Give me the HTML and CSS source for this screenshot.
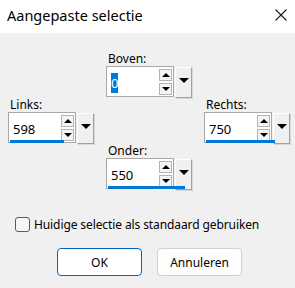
FILE: index.html
```html
<!DOCTYPE html>
<html>
<head>
<meta charset="utf-8">
<link rel="stylesheet" href="styles.css">
</head>
<body>
<div class="window">
  <div class="titlebar">
    <span class="title">Aangepaste selectie</span>
    <svg class="close" width="12" height="12" viewBox="0 0 12 12"><path d="M0.5 0.5L11.5 11.5M11.5 0.5L0.5 11.5" stroke="#1a1a1a" stroke-width="1.1" fill="none"/></svg>
  </div>
  <div class="content">
    <div class="grid">
      <div class="cell boven">
        <div class="label">Boven:</div>
        <div class="spin">
          <div class="row">
            <div class="field"><span class="value"><span class="sel">0</span></span>
              <div class="arrows"><div class="ab"><i class="up"></i></div><div class="ab"><i class="dn"></i></div></div>
            </div>
            <div class="drop"><i class="dd"></i></div>
          </div>
        </div>
      </div>
      <div class="cell links">
        <div class="label">Links:</div>
        <div class="spin">
          <div class="row">
            <div class="field"><span class="value">598</span>
              <div class="arrows"><div class="ab"><i class="up"></i></div><div class="ab"><i class="dn"></i></div></div>
            </div>
            <div class="drop"><i class="dd"></i></div>
          </div>
          <div class="bar" style="width:54px"></div>
        </div>
      </div>
      <div class="cell rechts">
        <div class="label">Rechts:</div>
        <div class="spin">
          <div class="row">
            <div class="field"><span class="value">750</span>
              <div class="arrows"><div class="ab"><i class="up"></i></div><div class="ab"><i class="dn"></i></div></div>
            </div>
            <div class="drop"><i class="dd"></i></div>
          </div>
          <div class="bar" style="width:69px"></div>
        </div>
      </div>
      <div class="cell onder">
        <div class="label">Onder:</div>
        <div class="spin">
          <div class="row">
            <div class="field"><span class="value">550</span>
              <div class="arrows"><div class="ab"><i class="up"></i></div><div class="ab"><i class="dn"></i></div></div>
            </div>
            <div class="drop"><i class="dd"></i></div>
          </div>
          <div class="bar" style="width:77px"></div>
        </div>
      </div>
    </div>
    <label class="check"><span class="box"></span><span class="ctext">Huidige selectie als standaard gebruiken</span></label>
    <div class="buttons">
      <button class="btn primary">OK</button>
      <button class="btn">Annuleren</button>
    </div>
  </div>
</div>
</body>
</html>
```
FILE: styles.css
```css
html, body {
  margin: 0;
  padding: 0;
}
body {
  width: 295px;
  height: 288px;
  overflow: hidden;
  font-family: "Noto Sans", "Open Sans", sans-serif;
  color: #000;
}
.window {
  width: 295px;
  height: 288px;
  background: #f0f0f0;
  display: flex;
  flex-direction: column;
}
.titlebar {
  height: 33px;
  background: #fff;
  display: flex;
  align-items: center;
  justify-content: space-between;
  padding: 0 8px 0 7px;
}
.title {
  font-size: 14.5px;
  color: #000;
  margin-top: -3px;
}
.close {
  margin-top: -3px;
}
.content {
  display: flex;
  flex-direction: column;
}
.grid {
  display: grid;
  grid-template-columns: 86px 86px 86px;
  grid-template-rows: 46px 46px 46px;
  column-gap: 12px;
  padding: 18px 0 0 8px;
}
.boven { grid-column: 2; grid-row: 1; }
.links { grid-column: 1; grid-row: 2; }
.rechts { grid-column: 3; grid-row: 2; }
.onder { grid-column: 2; grid-row: 3; }
.label {
  font-size: 12px;
  line-height: 15px;
  height: 15px;
  padding-left: 2px;
}
.spin {
  display: flex;
  flex-direction: column;
}
.row {
  display: flex;
  height: 31px;
}
.field {
  width: 66px;
  height: 29px;
  background: #fff;
  border: 1px solid #a8a8a8;
  display: flex;
  align-items: center;
  justify-content: space-between;
}
.value {
  font-size: 13px;
  padding-left: 4px;
  margin-top: 3px;
  color: #000;
}
.sel {
  background: #0078d7;
  color: #fff;
  padding: 1px 0;
}
.arrows {
  display: flex;
  flex-direction: column;
  gap: 2px;
  margin-right: 1px;
}
.ab {
  width: 11px;
  height: 10px;
  border: 1px solid #b4b4b4;
  background: #f4f4f4;
  display: flex;
  align-items: center;
  justify-content: center;
}
.up {
  width: 0;
  height: 0;
  border-left: 4px solid transparent;
  border-right: 4px solid transparent;
  border-bottom: 4px solid #000;
}
.dn {
  width: 0;
  height: 0;
  border-left: 4px solid transparent;
  border-right: 4px solid transparent;
  border-top: 4px solid #000;
}
.drop {
  width: 15px;
  height: 29px;
  margin-left: 1px;
  margin-top: 1px;
  background: #f0f0f0;
  border-top: 1px solid #fff;
  border-left: 1px solid #fff;
  border-right: 1px solid #a0a0a0;
  border-bottom: 1px solid #a0a0a0;
  box-shadow: 1px 1px 0 #d8d8d8;
  display: flex;
  align-items: center;
  justify-content: center;
}
.dd {
  width: 0;
  height: 0;
  border-left: 5px solid transparent;
  border-right: 5px solid transparent;
  border-top: 5px solid #000;
  margin-top: -4px;
}
.bar {
  height: 3px;
  background: #0078d7;
  margin: -3px 0 0 2px;
  position: relative;
}
.check {
  display: flex;
  align-items: center;
  gap: 4px;
  padding-left: 15px;
  margin-top: 27px;
  height: 16px;
}
.box {
  width: 13px;
  height: 13px;
  border: 1px solid #5a5a5a;
  border-radius: 3px;
  background: #f7f7f7;
}
.ctext {
  font-size: 12px;
  letter-spacing: -0.1px;
  color: #000;
}
.buttons {
  display: flex;
  gap: 15px;
  padding-left: 57px;
  margin-top: 16px;
}
.btn {
  width: 85px;
  height: 28px;
  font-family: "Noto Sans", "Open Sans", sans-serif;
  font-size: 12px;
  background: #fdfdfd;
  border: 1px solid #d0d0d0;
  border-radius: 4px;
  color: #000;
  padding: 0;
}
.btn.primary {
  border: 1px solid #0067c0;
  background: #fff;
}
```
